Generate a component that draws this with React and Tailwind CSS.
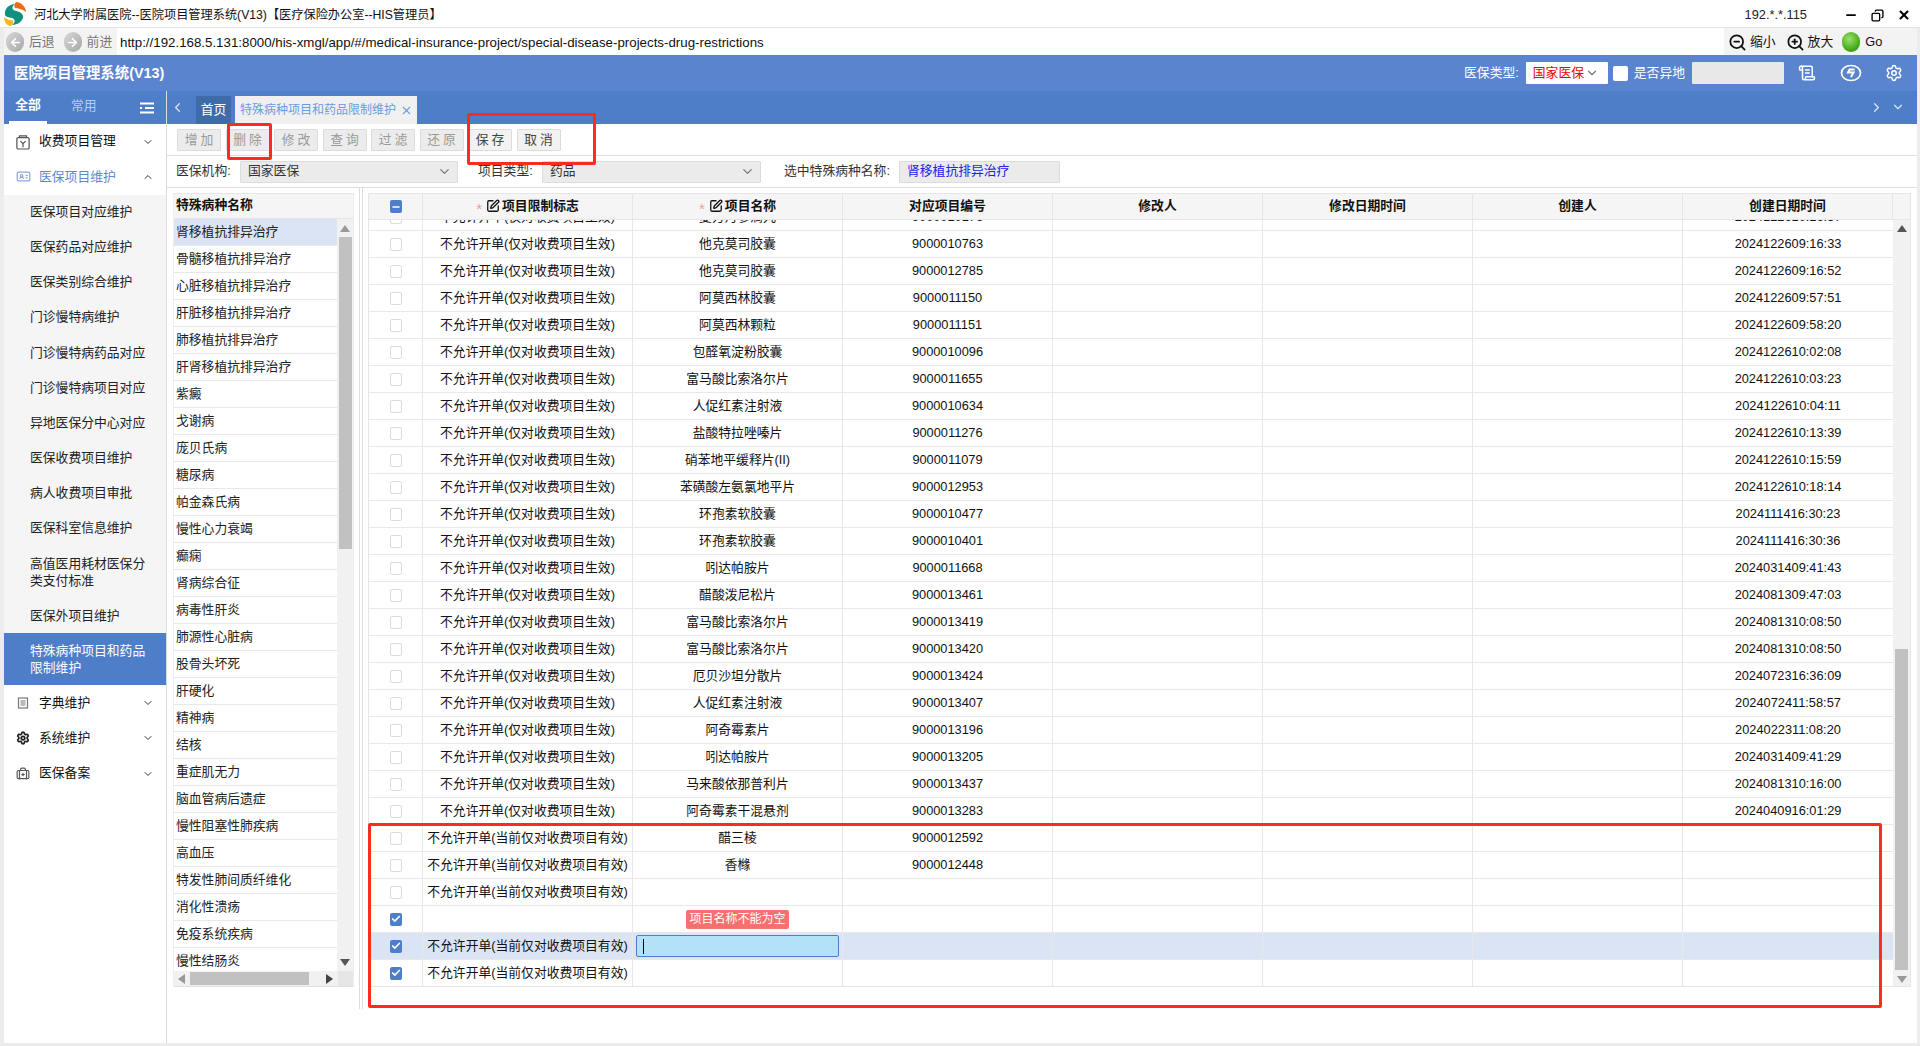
import React from "react";
import {
  ArrowLeft,
  ArrowRight,
  BriefcaseMedical,
  Check,
  ChevronDown,
  ChevronLeft,
  ChevronRight,
  ChevronUp,
  Copy,
  IdCard,
  Minus,
  ScrollText,
  Settings,
  SquarePen,
  X,
  ZoomIn,
  ZoomOut,
} from "lucide-react";

const subMenus = [
  "医保项目对应维护",
  "医保药品对应维护",
  "医保类别综合维护",
  "门诊慢特病维护",
  "门诊慢特病药品对应",
  "门诊慢特病项目对应",
  "异地医保分中心对应",
  "医保收费项目维护",
  "病人收费项目审批",
  "医保科室信息维护",
];

const diseases = [
  "肾移植抗排异治疗",
  "骨髓移植抗排异治疗",
  "心脏移植抗排异治疗",
  "肝脏移植抗排异治疗",
  "肺移植抗排异治疗",
  "肝肾移植抗排异治疗",
  "紫癜",
  "戈谢病",
  "庞贝氏病",
  "糖尿病",
  "帕金森氏病",
  "慢性心力衰竭",
  "癫痫",
  "肾病综合征",
  "病毒性肝炎",
  "肺源性心脏病",
  "股骨头坏死",
  "肝硬化",
  "精神病",
  "结核",
  "重症肌无力",
  "脑血管病后遗症",
  "慢性阻塞性肺疾病",
  "高血压",
  "特发性肺间质纤维化",
  "消化性溃疡",
  "免疫系统疾病",
  "慢性结肠炎",
];

const drugs = [
  ["复方丹参滴丸", "9000010176", "2024122610:16:37"],
  ["他克莫司胶囊", "9000010763", "2024122609:16:33"],
  ["他克莫司胶囊", "9000012785", "2024122609:16:52"],
  ["阿莫西林胶囊", "9000011150", "2024122609:57:51"],
  ["阿莫西林颗粒", "9000011151", "2024122609:58:20"],
  ["包醛氧淀粉胶囊", "9000010096", "2024122610:02:08"],
  ["富马酸比索洛尔片", "9000011655", "2024122610:03:23"],
  ["人促红素注射液", "9000010634", "2024122610:04:11"],
  ["盐酸特拉唑嗪片", "9000011276", "2024122610:13:39"],
  ["硝苯地平缓释片(II)", "9000011079", "2024122610:15:59"],
  ["苯磺酸左氨氯地平片", "9000012953", "2024122610:18:14"],
  ["环孢素软胶囊", "9000010477", "2024111416:30:23"],
  ["环孢素软胶囊", "9000010401", "2024111416:30:36"],
  ["吲达帕胺片", "9000011668", "2024031409:41:43"],
  ["醋酸泼尼松片", "9000013461", "2024081309:47:03"],
  ["富马酸比索洛尔片", "9000013419", "2024081310:08:50"],
  ["富马酸比索洛尔片", "9000013420", "2024081310:08:50"],
  ["厄贝沙坦分散片", "9000013424", "2024072316:36:09"],
  ["人促红素注射液", "9000013407", "2024072411:58:57"],
  ["阿奇霉素片", "9000013196", "2024022311:08:20"],
  ["吲达帕胺片", "9000013205", "2024031409:41:29"],
  ["马来酸依那普利片", "9000013437", "2024081310:16:00"],
  ["阿奇霉素干混悬剂", "9000013283", "2024040916:01:29"],
];

const OLD_FLAG = "不允许开单(仅对收费项目生效)";
const NEW_FLAG = "不允许开单(当前仅对收费项目有效)";

function Triangle({ dir, className }) {
  const points = {
    up: "5,1 10,8 0,8",
    down: "0,2 10,2 5,9",
    left: "8,0 8,10 1,5",
    right: "2,0 2,10 9,5",
  };
  return (
    <svg viewBox="0 0 10 10" className={className} width="10" height="10">
      <polygon points={points[dir]} fill="currentColor" />
    </svg>
  );
}

function Logo() {
  return (
    <svg viewBox="0 0 25 26" width="25" height="26" className="shrink-0 -mt-[3px]">
      <path d="M3 14C2 8 7 3 13 3 9 6 10 9 14 10 19 11 22 14 21 17 19 22 14 24 10 24 14 21 13 18 10 17 6 16 4 16 3 14Z" fill="#12907f" />
      <path d="M14 1C19 1 24 6 24 11 20 8 16 7 13 7 12 5 12 3 14 1Z" fill="#ee6a12" />
      <path d="M2 16C5 19 9 19 11 19.500 12 21 11 23 9 25 5 25 2 21 2 16Z" fill="#f6b81c" />
    </svg>
  );
}

function NavCircle({ children }) {
  return (
    <span className="w-[18px] h-[20px] rounded-full bg-gradient-to-br from-[#d8d8d8] to-[#a8a8a8] flex items-center justify-center text-white">
      {children}
    </span>
  );
}

function TitleBar() {
  return (
    <div className="h-[28px] shrink-0 flex items-center pl-[2px] pt-[3px] bg-white border-b border-[#e4e4e4]">
      <Logo />
      <span className="ml-[7px] text-[#111] text-[12.2px]">
        河北大学附属医院--医院项目管理系统(V13)【医疗保险办公室--HIS管理员】
      </span>
      <span className="ml-auto text-[#222]">192.*.*.115</span>
      <div className="flex items-center ml-[37px] mr-[9px] gap-[13px] text-black">
        <Minus size={14} strokeWidth={3} />
        <Copy size={13} strokeWidth={2.5} className="-scale-x-100" />
        <X size={14} strokeWidth={3.5} />
      </div>
    </div>
  );
}

function AddressBar() {
  return (
    <div className="h-[27px] shrink-0 flex items-center bg-[#f3f3f3]">
      <div className="w-[113px] flex items-center pl-[2px] pt-[1px] text-[#777]">
        <NavCircle>
          <ArrowLeft size={13} strokeWidth={3} />
        </NavCircle>
        <span className="ml-[5px]">后退</span>
        <span className="ml-[9px]">
          <NavCircle>
            <ArrowRight size={13} strokeWidth={3} />
          </NavCircle>
        </span>
        <span className="ml-[5px]">前进</span>
      </div>
      <div className="w-[1607px] h-full bg-white flex items-center pl-[3px] pt-[2px] text-[#111] text-[13.3px]">
        http://192.168.5.131:8000/his-xmgl/app/#/medical-insurance-project/special-disease-projects-drug-restrictions
      </div>
      <div className="flex-1 flex items-center pl-[4px] pt-[1px] text-[#111]">
        <ZoomOut size={19} strokeWidth={2.2} />
        <span className="ml-[3px]">缩小</span>
        <ZoomIn size={19} strokeWidth={2.2} className="ml-[10px]" />
        <span className="ml-[3px]">放大</span>
        <span className="ml-[9px] w-[18px] h-[20px] rounded-full bg-[radial-gradient(circle_at_40%_35%,#9be36a,#43a818_65%,#2c7a0d)]" />
        <span className="ml-[5px]">Go</span>
      </div>
    </div>
  );
}

function Header() {
  return (
    <div className="h-[36px] shrink-0 flex items-center bg-[#5a84ce] text-white pl-[10px]">
      <span className="font-bold text-[14.4px]">医院项目管理系统(V13)</span>
      <span className="ml-auto">医保类型:</span>
      <div className="ml-[7px] w-[82px] h-[22px] bg-white rounded-[1px] flex items-center pl-[7px] text-[#f00000]">
        国家医保
        <ChevronDown size={14} className="ml-[1px] text-[#777]" />
      </div>
      <span className="ml-[5px] w-[15px] h-[15px] bg-white rounded-[2px]" />
      <span className="ml-[6px]">是否异地</span>
      <span className="ml-[7px] w-[92px] h-[22px] bg-[#e8e8e8] rounded-[1px]" />
      <ScrollText size={18} className="ml-[14px]" />
      <svg viewBox="0 0 22 18" width="22" height="18" className="ml-[24px]">
        <ellipse cx="11" cy="9" rx="9.500" ry="7.500" fill="none" stroke="currentColor" strokeWidth="1.700" />
        <path d="M14.500 5.500H9.500L8 8.500h5.500L11 13" fill="none" stroke="currentColor" strokeWidth="2" />
      </svg>
      <Settings size={18} className="ml-[23px] mr-[14px]" />
    </div>
  );
}

function TopMenu({ icon, label, active, open }) {
  return (
    <div className={`h-[35.300px] flex items-center pl-[8px] pr-[12px] ${active ? "text-[#5f86d0]" : "text-[#111]"}`}>
      <span className="w-[22px] flex justify-center">{icon}</span>
      <span className="ml-[5px]">{label}</span>
      <span className="ml-auto text-[#333]">
        {open ? <ChevronUp size={12} /> : <ChevronDown size={12} />}
      </span>
    </div>
  );
}

function Sidebar() {
  return (
    <div className="w-[163px] shrink-0 flex flex-col bg-white border-r border-[#dddddd]">
      <div className="h-[33px] bg-[#4f7ec9] flex items-center text-white relative">
        <span className="ml-[5px] w-[38px] h-full flex items-center justify-center pb-[1px] font-bold border-b-[3px] border-white">
          全部
        </span>
        <span className="ml-[24px] pb-[2px] text-[#b8ccec]">常用</span>
        <svg viewBox="0 0 14 12" width="14" height="12" className="ml-auto mr-[12px]">
          <path d="M0 1.500h14M5 6h9M0 10.500h14M0 6h2" stroke="currentColor" strokeWidth="2" />
        </svg>
      </div>
      <TopMenu
        label="收费项目管理"
        icon={
          <svg viewBox="0 0 16 18" width="14" height="16" fill="none" stroke="#555" strokeWidth="1.400">
            <rect x="1" y="4" width="14" height="13" rx="1.500" />
            <path d="M4 4V2h8v2M5 8l3 3 3-3M8 11v4" />
          </svg>
        }
      />
      <TopMenu active open label="医保项目维护" icon={<IdCard size={15} className="text-[#8fa8dc]" />} />
      <div className="bg-[#f5f5f5] flex flex-col">
        {subMenus.map((m) => (
          <div key={m} className="h-[35.200px] flex items-center pl-[26px] text-[#222]">
            {m}
          </div>
        ))}
        <div className="h-[52px] flex items-center pl-[26px] text-[#222] leading-[17px]">
          <span className="w-[120px]">高值医用耗材医保分类支付标准</span>
        </div>
        <div className="h-[35px] flex items-center pl-[26px] text-[#222]">医保外项目维护</div>
        <div className="h-[52px] flex items-center pl-[26px] bg-[#4f7ec9] text-white leading-[17px]">
          <span className="w-[120px]">特殊病种项目和药品限制维护</span>
        </div>
      </div>
      <TopMenu
        label="字典维护"
        icon={
          <svg viewBox="0 0 12 12" width="12" height="12" fill="none" stroke="#777" strokeWidth="1.200">
            <rect x="1.500" y="1" width="9" height="10" />
            <path d="M3.500 4h5M3.500 6h5M3.500 8h5" />
          </svg>
        }
      />
      <TopMenu label="系统维护" icon={<Settings size={14} strokeWidth={3} className="text-[#222]" />} />
      <TopMenu label="医保备案" icon={<BriefcaseMedical size={14} className="text-[#555]" />} />
    </div>
  );
}

function TabBar() {
  return (
    <div className="h-[33px] shrink-0 bg-[#4f7ec9] flex items-end text-white">
      <ChevronLeft size={15} className="ml-[3px] mb-[9px] text-[#dbe6f7]" />
      <span className="ml-[11px] w-[35px] h-[28px] bg-[#3f6ba8] flex items-center justify-center">首页</span>
      <div className="ml-[4px] w-[182px] h-[28px] bg-[#f0f0f0] text-[#6b9be0] text-[12px] whitespace-nowrap flex items-center pl-[5px]">
        特殊病种项目和药品限制维护
        <X size={13} className="ml-[4px] shrink-0" />
      </div>
      <ChevronRight size={15} className="ml-auto mb-[9px] text-[#dbe6f7]" />
      <ChevronDown size={14} className="ml-[7px] mr-[12px] mb-[10px] text-[#dbe6f7]" />
    </div>
  );
}

function Toolbar() {
  const disabled = ["增加", "删除", "修改", "查询", "过滤", "还原"];
  const enabled = ["保存", "取消"];
  return (
    <div className="h-[32px] shrink-0 flex items-start pt-[5px] pl-[10px] gap-[4.500px] border-b border-[#dddddd] bg-white">
      {disabled.map((b) => (
        <span key={b} className="w-[44px] h-[22px] flex items-center justify-center pl-[3px] bg-[#ececec] border border-[#dcdcdc] rounded-[1px] text-[#9a9a9a] tracking-[3px]">
          {b}
        </span>
      ))}
      {enabled.map((b) => (
        <span key={b} className="w-[44px] h-[22px] flex items-center justify-center pl-[3px] bg-[#f2f2f2] border border-[#dcdcdc] rounded-[1px] text-[#444] tracking-[3px]">
          {b}
        </span>
      ))}
    </div>
  );
}

function FilterBar() {
  return (
    <div className="h-[32px] shrink-0 flex items-center pl-[9px] border-b border-[#dddddd] bg-white text-[#333]">
      <span className="w-[64px]">医保机构:</span>
      <div className="w-[218px] h-[22px] bg-[#ebebeb] border border-[#dcdcdc] rounded-[1px] flex items-center justify-between pl-[7px] pr-[5px]">
        国家医保
        <ChevronDown size={15} className="text-[#777]" />
      </div>
      <span className="ml-[20px] w-[64px]">项目类型:</span>
      <div className="w-[219px] h-[22px] bg-[#ebebeb] border border-[#dcdcdc] rounded-[1px] flex items-center justify-between pl-[7px] pr-[5px]">
        药品
        <ChevronDown size={15} className="text-[#777]" />
      </div>
      <span className="ml-[23px] w-[115px]">选中特殊病种名称:</span>
      <div className="w-[161px] h-[22px] bg-[#ebebeb] border border-[#dcdcdc] rounded-[1px] flex items-center pl-[7px] text-[#2222ee]">
        肾移植抗排异治疗
      </div>
    </div>
  );
}

function DiseaseList() {
  return (
    <div className="w-[181px] h-[794px] shrink-0 flex flex-col border-l border-r border-[#eeeeee]">
      <div className="h-[26px] shrink-0 bg-[#f5f5f5] border-t border-b border-[#e6e6e6] flex items-center pl-[2px] pb-[1px] font-bold text-[#111]">
        特殊病种名称
      </div>
      <div className="h-[752px] flex overflow-hidden">
        <div className="flex-1 overflow-hidden">
          {diseases.map((d, i) => (
            <div key={d} className={`h-[27px] flex items-center pl-[2px] border-b border-[#e8e8e8] text-[#222] ${i === 0 ? "bg-[#dbe4f4]" : "bg-white"}`}>
              {d}
            </div>
          ))}
        </div>
        <div className="w-[16px] bg-[#f1f1f1] flex flex-col items-center">
          <Triangle dir="up" className="mt-[5px] text-[#999]" />
          <div className="w-[13px] h-[312px] mt-[3px] bg-[#c1c1c1]" />
          <Triangle dir="down" className="mt-auto mb-[4px] text-[#555]" />
        </div>
      </div>
      <div className="h-[16px] shrink-0 flex bg-[#f1f1f1] border-b border-[#e0e0e0]">
        <div className="w-[164px] flex items-center pl-[3px]">
          <Triangle dir="left" className="text-[#999]" />
          <div className="w-[119px] h-[13px] ml-[3px] bg-[#c1c1c1]" />
          <Triangle dir="right" className="ml-[15px] text-[#444]" />
        </div>
        <div className="flex-1 bg-[#e6e6e6]" />
      </div>
    </div>
  );
}

function Box({ checked }) {
  if (checked) {
    return (
      <span className="w-[12px] h-[13px] rounded-[2px] bg-[#4f7ec9] flex items-center justify-center text-white">
        <Check size={10} strokeWidth={4} />
      </span>
    );
  }
  return <span className="w-[12px] h-[13px] rounded-[2px] bg-white border border-[#dcdcdc]" />;
}

function HeaderCell({ children, edit }) {
  return (
    <div className="h-full flex items-center justify-center pb-[1px] border-r border-[#e6e6e6] font-bold text-[#111]">
      {edit && (
        <>
          <span className="text-[#f59a9a] text-[15px] font-normal mt-[5px] mr-[4px]">*</span>
          <SquarePen size={14} strokeWidth={2.2} className="mr-[2px]" />
        </>
      )}
      {children}
    </div>
  );
}

function Row({ checked, flag, name, code, date, selected, children }) {
  return (
    <div className={`h-[27px] grid grid-cols-[54px_repeat(7,210px)] border-b border-[#e8e8e8] text-[#111] ${selected ? "bg-[#dbe4f4]" : "bg-white"}`}>
      <div className="flex items-center justify-center border-r border-[#e8e8e8]">
        <Box checked={checked} />
      </div>
      <div className="flex items-center justify-center border-r border-[#e8e8e8]">{flag}</div>
      <div className="flex items-center justify-center border-r border-[#e8e8e8]">{children || name}</div>
      <div className="flex items-center justify-center border-r border-[#e8e8e8]">{code}</div>
      <div className="border-r border-[#e8e8e8]" />
      <div className="border-r border-[#e8e8e8]" />
      <div className="border-r border-[#e8e8e8]" />
      <div className="flex items-center justify-center">{date}</div>
    </div>
  );
}

function DrugTable() {
  return (
    <div className="w-[1543px] h-[794px] shrink-0 flex flex-col">
      <div className="h-[27px] shrink-0 flex bg-[#f5f5f5] border-t border-b border-l border-r border-[#e6e6e6]">
        <div className="w-[1524px] h-full grid grid-cols-[54px_repeat(7,210px)]">
          <div className="flex items-center justify-center border-r border-[#e6e6e6]">
            <span className="w-[12px] h-[13px] rounded-[2px] bg-[#4f7ec9] flex items-center justify-center text-white">
              <Minus size={10} strokeWidth={4} />
            </span>
          </div>
          <HeaderCell edit>项目限制标志</HeaderCell>
          <HeaderCell edit>项目名称</HeaderCell>
          <HeaderCell>对应项目编号</HeaderCell>
          <HeaderCell>修改人</HeaderCell>
          <HeaderCell>修改日期时间</HeaderCell>
          <HeaderCell>创建人</HeaderCell>
          <HeaderCell>创建日期时间</HeaderCell>
        </div>
      </div>
      <div className="h-[767px] flex border-l border-r border-b border-[#e6e6e6]">
        <div className="w-[1524px] overflow-hidden">
          <div className="-mt-[16px]">
            {drugs.map((d) => (
              <Row key={d[1]} flag={OLD_FLAG} name={d[0]} code={d[1]} date={d[2]} />
            ))}
            <Row flag={NEW_FLAG} name="醋三棱" code="9000012592" />
            <Row flag={NEW_FLAG} name="香橼" code="9000012448" />
            <Row flag={NEW_FLAG} />
            <Row checked>
              <span className="w-[103px] h-[19px] bg-[#f77070] rounded-[2px] text-white text-[12px] flex items-center justify-center">
                项目名称不能为空
              </span>
            </Row>
            <Row checked selected flag={NEW_FLAG}>
              <div className="w-[203px] h-[22px] bg-[#b3e1f7] border border-[#4a7fd0] rounded-[2px] flex items-center pl-[6px]">
                <span className="w-[1px] h-[15px] bg-black" />
              </div>
            </Row>
            <Row checked flag={NEW_FLAG} />
          </div>
        </div>
        <div className="flex-1 bg-[#f1f1f1] flex flex-col items-center">
          <Triangle dir="up" className="mt-[4px] text-[#555]" />
          <div className="w-[13px] h-[321px] mt-auto bg-[#c1c1c1]" />
          <Triangle dir="down" className="mt-[4px] mb-[2px] text-[#999]" />
        </div>
      </div>
    </div>
  );
}

export default function App() {
  return (
    <div className="relative w-full h-[1046px] overflow-hidden bg-white font-['Liberation_Sans','Noto_Sans_CJK_SC',sans-serif] text-[12.8px] leading-none">
      <TitleBar />
      <div className="h-[1018px] flex flex-col pl-[4px] pr-[3px] pb-[3px] bg-[#ececec]">
        <AddressBar />
        <Header />
        <div className="flex-1 flex min-h-0 bg-white">
          <Sidebar />
          <div className="flex-1 min-w-0 flex flex-col">
            <TabBar />
            <Toolbar />
            <FilterBar />
            <div className="flex pl-[6px] bg-white">
              <div className="pt-[5px]">
                <DiseaseList />
              </div>
              <div className="w-[4px] h-[821px] ml-[5px] mr-[5px] border-l border-r border-[#dddddd]" />
              <div className="pt-[5px]">
                <DrugTable />
              </div>
            </div>
          </div>
        </div>
      </div>
      <div className="absolute left-[227px] top-[123px] w-[45px] h-[37px] border-[3px] border-[#ff2a20] rounded-[2px]" />
      <div className="absolute left-[467px] top-[113px] w-[129px] h-[52px] border-[3px] border-[#ff2a20] rounded-[2px]" />
      <div className="absolute left-[368px] top-[823px] w-[1514px] h-[185px] border-[3px] border-[#ff2a20] rounded-[2px]" />
    </div>
  );
}
